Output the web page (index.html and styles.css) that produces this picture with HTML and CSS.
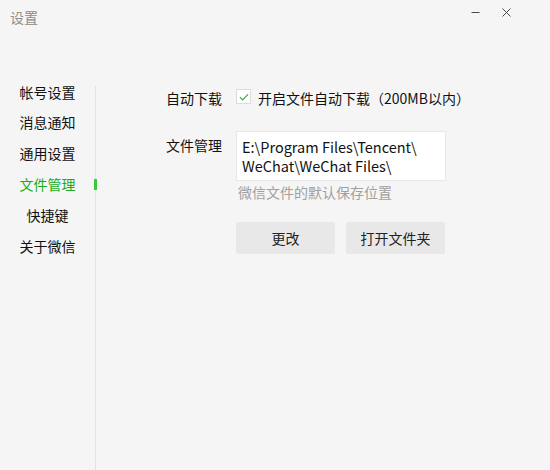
FILE: index.html
```html
<!DOCTYPE html>
<html lang="zh-CN">
<head>
<meta charset="utf-8">
<title>设置</title>
<link rel="stylesheet" href="styles.css">
</head>
<body>
<div class="window">
  <header class="titlebar">
    <span class="title">设置</span>
    <div class="controls">
      <span class="ctl min"><svg width="9" height="9" viewBox="0 0 9 9"><path d="M0.5 4.5h8" stroke="#4a4a4a" stroke-width="1"/></svg></span>
      <span class="ctl close"><svg width="9" height="9" viewBox="0 0 9 9"><path d="M0.5 0.5l8 8M8.5 0.5l-8 8" stroke="#4a4a4a" stroke-width="1"/></svg></span>
    </div>
  </header>
  <div class="main">
    <ul class="nav">
      <li>帐号设置</li>
      <li>消息通知</li>
      <li>通用设置</li>
      <li class="active">文件管理</li>
      <li>快捷键</li>
      <li>关于微信</li>
    </ul>
    <div class="divider"></div>
    <section class="content">
      <div class="row row-auto">
        <span class="label">自动下载</span>
        <label class="check">
          <span class="box"><svg width="12" height="12" viewBox="0 0 12 12"><path d="M2 6.2l2.6 2.6L10 3.4" fill="none" stroke="#2bb33a" stroke-width="1.2"/></svg></span>
          <span>开启文件自动下载（200MB以内）</span>
        </label>
      </div>
      <div class="row row-path">
        <span class="label label-top">文件管理</span>
        <div class="field">
          <div class="path">E:\Program Files\Tencent\<br>WeChat\WeChat Files\</div>
          <div class="hint">微信文件的默认保存位置</div>
          <div class="buttons">
            <button class="btn">更改</button>
            <button class="btn">打开文件夹</button>
          </div>
        </div>
      </div>
    </section>
  </div>
</div>
</body>
</html>
```

FILE: styles.css
```css
* { box-sizing: border-box; }
html, body { margin: 0; padding: 0; }
body {
  background: #f5f5f5;
  font-family: "Noto Sans CJK SC", "Noto Sans", sans-serif;
  font-size: 14px;
  color: #111;
  width: 550px;
  height: 470px;
  overflow: hidden;
}
.window { display: flex; flex-direction: column; height: 470px; }
.titlebar {
  height: 60px;
  display: flex;
  align-items: flex-start;
  padding: 7px 0 0 10px;
  flex: none;
}
.title { color: #8c8c8c; font-size: 14px; line-height: 20px; }
.controls { margin-left: auto; display: flex; gap: 22px; padding-right: 39px; padding-top: 1px; }
.ctl { width: 9px; height: 9px; display: block; }
.ctl svg { display: block; }
.main { flex: 1; display: flex; }
.nav {
  list-style: none;
  margin: 0;
  padding: 16.6px 0 0;
  width: 95px;
  flex: none;
}
.nav li {
  height: 30.8px;
  line-height: 30.8px;
  text-align: center;
  position: relative;
  color: #111;
}
.nav li.active { color: #1aad19; }
.nav li.active::after {
  content: "";
  position: absolute;
  right: -2px;
  top: 10px;
  width: 3px;
  height: 11px;
  background: #3cc83c;
  z-index: 1;
}
.divider { width: 1px; background: #e2e2e2; margin-top: 26px; flex: none; }
.content { flex: 1; padding: 28px 0 0 70px; }
.row { display: flex; align-items: center; }
.label { width: 70px; flex: none; line-height: 20px; }
.row-auto { height: 20px; }
.check { display: flex; align-items: center; gap: 7px; }
.box {
  width: 15px; height: 15px;
  background: #fff;
  border: 1px solid #dcdcdc;
  display: flex; align-items: center; justify-content: center;
  margin-top: -3px;
}
.box svg { display: block; }
.row-path { margin-top: 23px; align-items: flex-start; }
.label-top { margin-top: 4px; }
.field { display: flex; flex-direction: column; }
.path {
  width: 210px;
  height: 50px;
  background: #fff;
  border: 1px solid #e8e8e8;
  padding: 5px 5px;
  line-height: 19px;
  font-size: 14.5px;
  color: #111;
}
.hint { color: #a0a0a0; line-height: 20px; margin-top: 1px; padding-left: 2px; }
.buttons { display: flex; gap: 11px; margin-top: 20px; }
.btn {
  width: 99px;
  height: 32px;
  border: none;
  border-radius: 2px;
  background: #e8e8e8;
  color: #222;
  font-family: inherit;
  font-size: 14px;
  padding: 0;
}
```
